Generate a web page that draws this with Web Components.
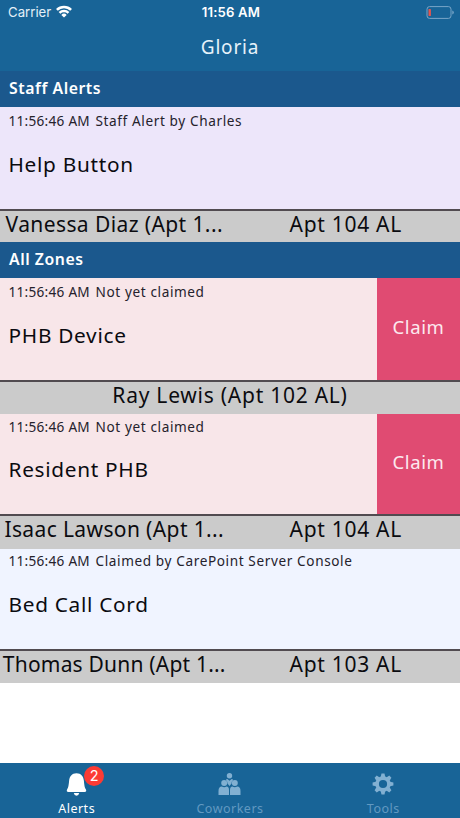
<!DOCTYPE html>
<html lang="en">
<head>
<meta charset="utf-8">
<title>Alerts</title>
<style>
    body {
        margin: 0;
        font-family: "Noto Sans", sans-serif;
    }
</style>
</head>
<body>
<alerts-app>
    <status-bar slot="top" carrier="Carrier" time="11:56 AM"></status-bar>
    <title-bar slot="top">Gloria</title-bar>

    <alert-section heading="Staff Alerts" style="--place-height: 33px">
        <alert-card kind="staff" time="11:56:46 AM" status="Staff Alert by Charles" name="Help Button" style="--who-gap: 0.4px">
            <span slot="who">Vanessa Diaz (Apt 1...</span>
            <span slot="where">Apt 104 AL</span>
        </alert-card>
    </alert-section>

    <alert-section heading="All Zones">
        <alert-card kind="open" time="11:56:46 AM" status="Not yet claimed" name="PHB Device" claim style="--who-gap: 0.75px">
            <span slot="who">Ray Lewis (Apt 102 AL)</span>
        </alert-card>
        <alert-card kind="open" time="11:56:46 AM" status="Not yet claimed" name="Resident PHB" claim style="--who-gap: 0.38px">
            <span slot="who">Isaac Lawson (Apt 1...</span>
            <span slot="where">Apt 104 AL</span>
        </alert-card>
        <alert-card kind="claimed" time="11:56:46 AM" status="Claimed by CarePoint Server Console" name="Bed Call Cord" style="--who-gap: 0.2px">
            <span slot="who">Thomas Dunn (Apt 1...</span>
            <span slot="where">Apt 103 AL</span>
        </alert-card>
    </alert-section>

    <tab-item slot="tabs" icon="bell" badge="2" active>Alerts</tab-item>
    <tab-item slot="tabs" icon="people">Coworkers</tab-item>
    <tab-item slot="tabs" icon="gear">Tools</tab-item>
</alerts-app>

<script>
class AlertsApp extends HTMLElement {
    constructor() {
        super();
        this.attachShadow({ mode: 'open' });
    }

    connectedCallback() {
        this.shadowRoot.innerHTML = `
      <style>
        :host {
          display: flex;
          flex-direction: column;
          height: 818px;
          overflow: hidden;
          background: #fff;
        }
        header { background: #186497; height: 71px; }
        main { flex: 1; }
        nav {
          display: grid;
          grid-template-columns: repeat(3, 1fr);
          height: 55px;
          background: #186497;
        }
      </style>
      <header><slot name="top"></slot></header>
      <main><slot></slot></main>
      <nav><slot name="tabs"></slot></nav>
    `;
    }
}

class StatusBar extends HTMLElement {
    constructor() {
        super();
        this.attachShadow({ mode: 'open' });
    }

    connectedCallback() {
        this.shadowRoot.innerHTML = `
      <style>
        :host {
          display: grid;
          grid-template-columns: 1fr auto 1fr;
          align-items: center;
          height: 24px;
          padding: 0 6px 0 8px;
          color: #fff;
          font: 13.2px/24px Inter, sans-serif;
        }
        .left { display: flex; align-items: center; gap: 5px; color: #e4f0f8; }
        .time { font-weight: 600; letter-spacing: 0.15px; }
        .battery { justify-self: end; }
        svg { display: block; }
        .wifi { margin-top: -2px; }
      </style>
      <div class="left">
        <span>${this.getAttribute('carrier')}</span>
        <svg class="wifi" width="16" height="13" viewBox="0 0 16 13" fill="none" stroke="#fff" stroke-width="2.5">
          <path d="M.9 4.900a10.100 10.100 0 0 1 14.200 0M3.500 7.900a6.400 6.400 0 0 1 9 0"/>
          <path d="M8 12.600 5.300 9.900a3.800 3.800 0 0 1 5.400 0z" fill="#fff" stroke="none"/>
        </svg>
      </div>
      <span class="time">${this.getAttribute('time')}</span>
      <svg class="battery" width="28" height="13" viewBox="0 0 28 13">
        <rect x="1" y="0.6" width="24" height="11.8" rx="2.6" fill="none" stroke="#79a6c8"/>
        <path d="M26.3 4.4q1.5.6 1.5 2.1t-1.5 2.1z" fill="#79a6c8"/>
        <rect x="2.5" y="2.9" width="2.4" height="7.2" rx="0.7" fill="#e8554e"/>
      </svg>
    `;
    }
}

class TitleBar extends HTMLElement {
    constructor() {
        super();
        this.attachShadow({ mode: 'open' });
    }

    connectedCallback() {
        this.shadowRoot.innerHTML = `
      <style>
        :host {
          display: block;
          height: 47px;
          text-align: center;
          color: #e6f2fa;
          font-size: 19px;
          line-height: 46px;
          letter-spacing: 0.8px;
        }
      </style>
      <slot></slot>
    `;
    }
}

class AlertSection extends HTMLElement {
    constructor() {
        super();
        this.attachShadow({ mode: 'open' });
    }

    connectedCallback() {
        this.shadowRoot.innerHTML = `
      <style>
        :host { display: block; }
        h2 {
          margin: 0;
          height: 36px;
          padding-left: 9px;
          background: #1b588d;
          color: #fff;
          font-size: 15.8px;
          font-weight: 600;
          line-height: 34px;
          letter-spacing: 0.55px;
        }
        /* the card under a heading is a little taller */
        ::slotted(alert-card:first-of-type) { --body-height: 102px; --body-top: 4px; }
      </style>
      <h2>${this.getAttribute('heading')}</h2>
      <slot></slot>
    `;
    }
}

class AlertCard extends HTMLElement {
    constructor() {
        super();
        this.attachShadow({ mode: 'open' });
    }

    connectedCallback() {
        const colors = { staff: '#ede6fa', open: '#f8e6e9', claimed: '#f0f4ff' };
        const claim = this.hasAttribute('claim') ? '<button>Claim</button>' : '';
        const where = this.querySelector('[slot=where]') ? '<div class="where"><slot name="where"></slot></div>' : '';
        this.shadowRoot.innerHTML = `
      <style>
        :host { display: block; color: #0b0b10; }
        .body {
          display: flex;
          height: var(--body-height, 100px);
          background: ${colors[this.getAttribute('kind')]};
        }
        .info { flex: 1; padding-left: 8.5px; white-space: nowrap; }
        .status {
          display: flex;
          gap: 5.5px;
          padding-top: var(--body-top, 2.4px);
          color: #25222c;
          font-size: 13.6px;
          line-height: 20px;
          letter-spacing: 0.61px;
        }
        .time { letter-spacing: 0.27px; }
        .name {
          margin-top: 18.6px;
          font-size: 20.8px;
          line-height: 28px;
          letter-spacing: 0.7px;
        }
        button {
          width: 83px;
          border: 0;
          padding: 0 0 6px;
          background: #e04b72;
          color: #fce9ef;
          font: 18.5px "Noto Sans", sans-serif;
          letter-spacing: 0.6px;
        }
        .place {
          display: flex;
          box-sizing: border-box;
          height: var(--place-height, 34.3px);
          border-top: 2px solid #514b50;
          background: #cbcbcb;
          font-size: 21px;
          line-height: 27px;
          letter-spacing: var(--who-gap);
          text-align: center;
          white-space: nowrap;
        }
        .place div { flex: 1 1 0; min-width: 0; }
        .place .where { letter-spacing: 0.7px; padding-left: 3px; }
      </style>
      <div class="body">
        <div class="info">
          <div class="status"><span class="time">${this.getAttribute('time')}</span><span>${this.getAttribute('status')}</span></div>
          <div class="name">${this.getAttribute('name')}</div>
        </div>
        ${claim}
      </div>
      <div class="place">
        <div><slot name="who"></slot></div>
        ${where}
      </div>
    `;
    }
}

const icons = {
    bell: `<path d="M10.5 1.2c4.700 0 7 3.200 7.400 7.500.4 4.800.8 6.800 1.900 8.500.9 1.300.4 2.800-1.200 2.800H2.400c-1.600 0-2.100-1.500-1.200-2.800 1.100-1.700 1.500-3.700 1.900-8.500.4-4.300 2.700-7.500 7.400-7.500z"/><path d="M7.800 21h5.400q-.5 2.700-2.700 2.700T7.800 21z"/>`,
    people: `<circle cx="11.500" cy="3.800" r="2.700"/><path d="M8 8.200q0-1.200 1.300-1.200l2.200 1.800L13.700 7Q15 7 15 8.200q-1.700 1.200-1.500 3.300l-2 2.500-2-2.500Q9.700 9.400 8 8.200z"/><circle cx="6.200" cy="11" r="3"/><circle cx="16.800" cy="11" r="3"/><path d="M.5 23v-4q0-4.300 3.300-4.500 2.400 1.400 4.800 0 2.400.3 2.400 3.500v5zM12 23v-5q0-3.200 2.400-3.500 2.400 1.400 4.800 0 3.300.2 3.300 4.500v4z"/>`,
    gear: `<g transform="translate(11 12)"><circle r="5.900" fill="none" stroke="currentColor" stroke-width="3.600"/>${
        [0, 45, 90, 135, 180, 225, 270, 315].map(a => `<path d="M-2.300-7 -1.500-10.400h3L2.300-7z" transform="rotate(${a})"/>`).join('')
    }</g>`
};

class TabItem extends HTMLElement {
    constructor() {
        super();
        this.attachShadow({ mode: 'open' });
    }

    connectedCallback() {
        const icon = this.getAttribute('icon');
        const badge = this.getAttribute('badge');
        const width = icon === 'bell' ? 21 : icon === 'people' ? 23 : 22;
        this.shadowRoot.innerHTML = `
      <style>
        :host {
          display: flex;
          flex-direction: column;
          align-items: center;
          padding-top: 9px;
          color: #6299c1;
          font-size: 12.5px;
          line-height: 18px;
          letter-spacing: 0.5px;
        }
        :host([active]) { color: #fff; }
        .icon { position: relative; height: 24px; margin-bottom: 4px; color: #82b0d2; }
        :host([active]) .icon { color: #fff; }
        svg { display: block; }
        .badge {
          position: absolute;
          left: 18px;
          top: -6px;
          width: 20px;
          height: 20px;
          border-radius: 50%;
          background: #fc3b34;
          color: #fff;
          font: 14.500px/20px Inter, sans-serif;
          letter-spacing: 0;
          text-align: center;
        }
      </style>
      <div class="icon">
        <svg width="${width}" height="24" viewBox="0 0 ${width} 24" fill="currentColor">${icons[icon]}</svg>
        ${badge ? `<span class="badge">${badge}</span>` : ''}
      </div>
      <slot></slot>
    `;
    }
}

customElements.define('alerts-app', AlertsApp);
customElements.define('status-bar', StatusBar);
customElements.define('title-bar', TitleBar);
customElements.define('alert-section', AlertSection);
customElements.define('alert-card', AlertCard);
customElements.define('tab-item', TabItem);
</script>
</body>
</html>
